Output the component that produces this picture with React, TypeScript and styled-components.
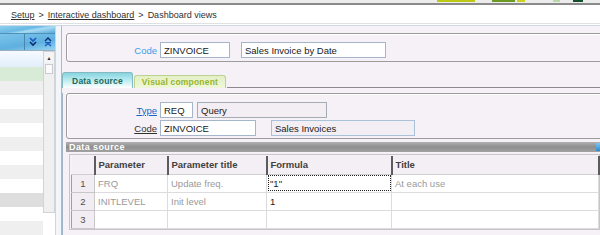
import React from "react";
import styled, { createGlobalStyle } from "styled-components";

const GlobalStyle = createGlobalStyle`
  html, body {
    margin: 0;
    padding: 0;
    width: 600px;
    height: 235px;
    overflow: hidden;
    background: #ffffff;
    font-family: "Liberation Sans", Arial, sans-serif;
    font-size: 9.5px;
    color: #202020;
  }
`;

const Page = styled.div`
  width: 600px;
  height: 235px;
  display: flex;
  flex-direction: column;
  overflow: hidden;
`;

const TopStrip = styled.div`
  height: 3px;
  background: #ececec;
  display: flex;
  border-bottom: 2px solid #8a8a8a;
`;

const StripItem = styled.div<{ w: number; left: number; color: string }>`
  width: ${(p) => p.w}px;
  margin-left: ${(p) => p.left}px;
  height: 2px;
  background: ${(p) => p.color};
`;

const Breadcrumb = styled.div`
  height: 17px;
  padding: 1px 0 0 11px;
  display: flex;
  align-items: center;
  gap: 4px;
  background: #ffffff;
  border-bottom: 1px solid #e0e0e0;
  color: #303030;
  font-size: 9px;
`;

const Crumb = styled.a`
  color: #303030;
  text-decoration: underline;
`;

const BlueRule = styled.div`
  height: 1px;
  background: #cbd9e8;
  margin-top: 1px;
`;

const Body = styled.div`
  flex: 1;
  display: flex;
  min-height: 0;
`;

const LeftPanel = styled.div`
  width: 55px;
  display: flex;
  flex-direction: column;
  overflow: hidden;
`;

const PanelHeader = styled.div`
  height: 18px;
  background: linear-gradient(170deg, #8fd0ee 0%, #6ab8e4 45%, #a8dcf4 60%, #58a8d8 100%);
  border-bottom: 1px solid #4f90b8;
`;

const PanelToolbar = styled.div`
  height: 16px;
  display: flex;
  align-items: center;
  background: linear-gradient(170deg, #7cc4ea 0%, #5eb0e0 60%, #98d4f0 100%);
  border-bottom: 1px solid #9ab0c0;
`;

const ToolGap = styled.div`
  width: 24px;
  height: 16px;
  border-right: 1px solid #4a86ac;
`;

const ToolIcon = styled.svg`
  width: 8px;
  height: 10px;
  margin-left: 4px;
  margin-right: 3px;
`;

const ListArea = styled.div`
  flex: 1;
  display: flex;
`;

const ListRows = styled.div`
  width: 43px;
  display: flex;
  flex-direction: column;
`;

const ListRow = styled.div<{ tone: string; h?: number }>`
  height: ${(p) => p.h ?? 14}px;
  flex-shrink: 0;
  background: ${(p) => p.tone};
  box-sizing: border-box;
`;

const ScrollBar = styled.div`
  width: 12px;
  height: 162px;
  box-sizing: border-box;
  background: #f0f0f0;
  border: 1px solid #d0d4d8;
  display: flex;
  flex-direction: column;
`;

const ScrollButton = styled.div`
  height: 11px;
  display: flex;
  align-items: center;
  justify-content: center;
  background: #f4f4f4;
  font-size: 5px;
  color: #303030;
`;

const ScrollThumb = styled.div`
  height: 8px;
  margin: 1px 1px 0;
  background: #fbfbfb;
  border: 1px solid #c8ccd0;
`;

const Divider = styled.div`
  width: 5px;
  background: #f2f6fa;
  border-left: 1px solid #c4d8ea;
  border-right: 1px solid #a4bccf;
`;

const Main = styled.div`
  flex: 1;
  background: #f6f1f6;
  overflow: hidden;
  padding-top: 7px;
  display: flex;
  flex-direction: column;
`;

const GroupBox = styled.div<{ h: number }>`
  margin-left: 4px;
  width: 560px;
  height: ${(p) => p.h}px;
  box-sizing: border-box;
  border: 1px solid #9c9c9c;
  border-radius: 3px;
  box-shadow: inset 1px 1px 0 #ffffff;
  padding: 8px 0 0 0;
  display: flex;
  flex-direction: column;
  gap: 2px;
`;

const FieldRow = styled.div`
  display: flex;
  align-items: center;
  height: 16px;
`;

const Label = styled.span<{ kind: "plain" | "link" | "under" }>`
  width: 93px;
  padding-right: 3px;
  text-align: right;
  box-sizing: border-box;
  color: ${(p) => (p.kind === "plain" ? "#3a9ce8" : p.kind === "link" ? "#1466c8" : "#303030")};
  text-decoration: ${(p) => (p.kind === "plain" ? "none" : "underline")};
`;

const Input = styled.div<{ w: number; gap?: number; muted?: boolean; tint?: string }>`
  width: ${(p) => p.w}px;
  height: 16px;
  margin-left: ${(p) => p.gap ?? 0}px;
  box-sizing: border-box;
  padding-left: 3px;
  display: flex;
  align-items: center;
  background: ${(p) => (p.muted ? "#f3eef3" : "#ffffff")};
  border: 1px solid ${(p) => p.tint ?? "#a6b6ca"};
  color: #202020;
  white-space: nowrap;
  overflow: hidden;
`;

const TabBar = styled.div`
  margin-top: 10px;
  height: 16px;
  display: flex;
  align-items: flex-end;
`;

const Tab = styled.div<{ active?: boolean; w: number }>`
  width: ${(p) => p.w}px;
  height: ${(p) => (p.active ? 16 : 13)}px;
  box-sizing: border-box;
  display: flex;
  align-items: center;
  justify-content: center;
  font-weight: bold;
  font-size: 8.5px;
  letter-spacing: 0.2px;
  border: 1px solid ${(p) => (p.active ? "#86b8c0" : "#bcd294")};
  border-bottom: none;
  border-radius: 3px 3px 0 0;
  color: ${(p) => (p.active ? "#1a6a5c" : "#98b42a")};
  background: ${(p) =>
    p.active
      ? "linear-gradient(#86d4e0 0%, #c4eef2 55%, #ffffff 100%)"
      : "linear-gradient(#e4f0c4 0%, #eef6d8 100%)"};
  margin-right: 1px;
  white-space: nowrap;
`;

const TabLine = styled.div`
  flex: 1;
  align-self: flex-end;
  height: 1px;
  background: #8a8a8a;
`;

const TabBody = styled.div`
  flex: 1;
  border-left: 1px solid #9fb4c6;
  margin-top: 5px;
  display: flex;
  flex-direction: column;
`;

const InnerBox = styled(GroupBox)`
  margin-left: 3px;
`;

const SectionBar = styled.div`
  margin: 3px 0 0 3px;
  height: 10px;
  display: flex;
  align-items: center;
  padding-left: 3px;
  background: linear-gradient(#b0b0b0 0%, #8e8e8e 50%, #a2a2a2 100%);
  color: #ffffff;
  font-weight: bold;
  font-size: 9px;
  letter-spacing: 0.4px;
  position: relative;
`;

const BarIcon = styled.div`
  position: absolute;
  right: 0;
  top: 1px;
  width: 4px;
  height: 8px;
  background: linear-gradient(#7cc8f0, #2a8ad0);
`;

const GridFrame = styled.div`
  margin: 2px 0 0 6px;
  width: 528px;
  border: 1px solid #c6c6c6;
  padding: 1px 0 0 1px;
  background: #f6f1f6;
`;

const Table = styled.table`
  border-collapse: collapse;
  table-layout: fixed;
  width: 527px;
  font-size: 9.5px;
`;

const HeadCell = styled.th<{ w: number }>`
  width: ${(p) => p.w}px;
  height: 18px;
  padding: 0 0 0 3px;
  text-align: left;
  font-weight: bold;
  color: #404040;
  background: #f4eff4;
  border-right: 2px solid #5c5c5c;
  border-bottom: 1px solid #cfcfcf;
  box-sizing: border-box;
`;

const RowHead = styled.td`
  height: 17px;
  padding: 0;
  text-align: center;
  color: #505050;
  background: #f2edf2;
  border: 1px solid #c8c8c8;
  border-left: 1px solid #a0a0a0;
`;

const Cell = styled.td<{ dim?: boolean }>`
  height: 17px;
  padding: 0 0 0 3px;
  color: ${(p) => (p.dim ? "#9a9a9a" : "#202020")};
  background: #ffffff;
  border: 1px solid #dcdcdc;
  white-space: nowrap;
  overflow: hidden;
`;

const FocusCell = styled(Cell)`
  outline: 1px dotted #202020;
  outline-offset: -2px;
`;

const listTones = [
  "#d7ebd7",
  "#efefef",
  "#ffffff",
  "#efefef",
  "#ffffff",
  "#efefef",
  "#ffffff",
  "#efefef",
  "#ffffff",
  "#dedede",
  "#ffffff",
  "#efefef",
];

const params = [
  { n: 1, code: "FRQ", title: "Update freq.", formula: '"1"', label: "At each use" },
  { n: 2, code: "INITLEVEL", title: "Init level", formula: "1", label: "" },
  { n: 3, code: "", title: "", formula: "", label: "" },
];

const App: React.FC = () => {
  return (
    <Page>
      <GlobalStyle />
      <TopStrip>
        <StripItem w={38} left={437} color="#bcc814" />
        <StripItem w={23} left={17} color="#6c9a24" />
        <StripItem w={8} left={2} color="#cad21c" />
        <StripItem w={7} left={28} color="#b8d8a8" />
        <StripItem w={10} left={13} color="#14502c" />
      </TopStrip>
      <Breadcrumb>
        <Crumb>Setup</Crumb>
        <span>&gt;</span>
        <Crumb>Interactive dashboard</Crumb>
        <span>&gt;</span>
        <span>Dashboard views</span>
      </Breadcrumb>
      <BlueRule />
      <Body>
        <LeftPanel>
          <PanelHeader />
          <PanelToolbar>
            <ToolGap />
            <ToolIcon viewBox="0 0 8 10">
              <path d="M1 1 L4 4 L7 1" fill="none" stroke="#1c58c0" strokeWidth="1.6" />
              <path d="M1 5 L4 8 L7 5" fill="none" stroke="#0c2c70" strokeWidth="1.6" />
            </ToolIcon>
            <ToolIcon viewBox="0 0 8 10">
              <path d="M1 4 L4 1 L7 4" fill="none" stroke="#0c2c70" strokeWidth="1.4" />
              <rect x="1" y="5" width="6" height="1.2" fill="#1c58c0" />
              <path d="M1 9 L4 6.5 L7 9" fill="none" stroke="#1c58c0" strokeWidth="1.4" />
            </ToolIcon>
          </PanelToolbar>
          <ListArea>
            <ListRows>
              <ListRow tone="linear-gradient(#f6faff, #e2eefa)" h={16} />
              {listTones.map((t, i) => (
                <ListRow key={i} tone={t} />
              ))}
            </ListRows>
            <ScrollBar>
              <ScrollButton>▲</ScrollButton>
              <ScrollThumb />
            </ScrollBar>
          </ListArea>
        </LeftPanel>
        <Divider />
        <Main>
          <GroupBox h={29}>
            <FieldRow>
              <Label kind="plain">Code</Label>
              <Input w={70}>ZINVOICE</Input>
              <Input w={145} gap={11}>Sales Invoice by Date</Input>
            </FieldRow>
          </GroupBox>
          <TabBar>
            <Tab active w={71}>Data source</Tab>
            <Tab w={92}>Visual component</Tab>
            <TabLine />
          </TabBar>
          <TabBody>
            <InnerBox h={46}>
              <FieldRow>
                <Label kind="link">Type</Label>
                <Input w={33}>REQ</Input>
                <Input w={130} gap={4} muted tint="#a4acb6">
                  Query
                </Input>
              </FieldRow>
              <FieldRow>
                <Label kind="under">Code</Label>
                <Input w={96}>ZINVOICE</Input>
                <Input w={144} gap={15} muted tint="#a8c2da">
                  Sales Invoices
                </Input>
              </FieldRow>
            </InnerBox>
            <SectionBar>
              Data source
              <BarIcon />
            </SectionBar>
            <GridFrame>
              <Table>
                <thead>
                  <tr>
                    <HeadCell w={23} />
                    <HeadCell w={73}>Parameter</HeadCell>
                    <HeadCell w={99}>Parameter title</HeadCell>
                    <HeadCell w={125}>Formula</HeadCell>
                    <HeadCell w={207}>Title</HeadCell>
                  </tr>
                </thead>
                <tbody>
                  {params.map((p) => (
                    <tr key={p.n}>
                      <RowHead>{p.n}</RowHead>
                      <Cell dim>{p.code}</Cell>
                      <Cell dim>{p.title}</Cell>
                      {p.n === 1 ? <FocusCell>{p.formula}</FocusCell> : <Cell>{p.formula}</Cell>}
                      <Cell dim>{p.label}</Cell>
                    </tr>
                  ))}
                </tbody>
              </Table>
            </GridFrame>
          </TabBody>
        </Main>
      </Body>
    </Page>
  );
};

export default App;
